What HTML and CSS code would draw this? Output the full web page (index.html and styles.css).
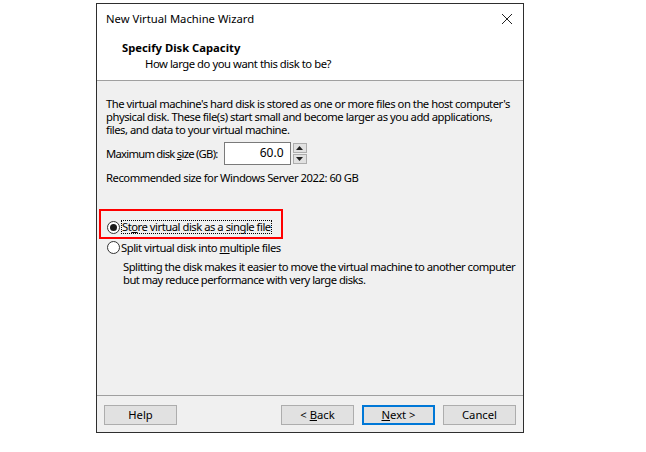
FILE: index.html
```html
<!DOCTYPE html>
<html>
<head>
<meta charset="utf-8">
<link rel="stylesheet" href="styles.css">
</head>
<body>
<div class="window">
  <div class="top">
    <div class="titlebar">
      <span class="title">New Virtual Machine Wizard</span>
      <svg class="close" width="12" height="12" viewBox="0 0 12 12"><path d="M1 1 L11 11 M11 1 L1 11" stroke="#222" stroke-width="1" fill="none"/></svg>
    </div>
    <div class="header">
      <div class="h-title">Specify Disk Capacity</div>
      <div class="h-sub">How large do you want this disk to be?</div>
    </div>
  </div>
  <div class="body">
    <p class="intro">The virtual machine's hard disk is stored as one or more files on the host computer's physical disk. These file(s) start small and become larger as you add applications, files, and data to your virtual machine.</p>
    <div class="size-row">
      <span class="label">Maximum disk <u>s</u>ize (GB):</span>
      <div class="spin">
        <div class="spin-input">60.0</div>
        <div class="spin-btns">
          <div class="spin-btn"><svg width="7" height="4" viewBox="0 0 7 4"><path d="M0 4 L3.5 0 L7 4 Z" fill="#222"/></svg></div>
          <div class="spin-btn"><svg width="7" height="4" viewBox="0 0 7 4"><path d="M0 0 L3.5 4 L7 0 Z" fill="#222"/></svg></div>
        </div>
      </div>
    </div>
    <p class="rec">Recommended size for Windows Server 2022: 60 GB</p>
    <div class="options">
      <div class="radio checked-row">
        <span class="dot checked"></span>
        <span class="focus">St<u>o</u>re virtual disk as a single file</span>
        <span class="highlight"></span>
      </div>
      <div class="radio">
        <span class="dot"></span>
        <span class="rlabel">Split virtual disk into <u>m</u>ultiple files</span>
      </div>
      <p class="desc">Splitting the disk makes it easier to move the virtual machine to another computer but may reduce performance with very large disks.</p>
    </div>
    <div class="spacer"></div>
    <div class="footer">
      <button class="btn">Help</button>
      <div class="grow"></div>
      <button class="btn">&lt; <u>B</u>ack</button>
      <button class="btn default"><u>N</u>ext &gt;</button>
      <button class="btn">Cancel</button>
    </div>
  </div>
</div>
</body>
</html>
```
FILE: styles.css
```css
* { box-sizing: border-box; }
html, body { margin: 0; padding: 0; background: #ffffff; }
body {
  font-family: "Segoe UI", "Noto Sans", "DejaVu Sans", sans-serif;
  font-size: 11.25px;
  color: #000;
}
.window {
  margin: 3px 0 0 96px;
  width: 428px;
  height: 430px;
  border: 1px solid #2e2e2e;
  background: #f0f0f0;
  display: flex;
  flex-direction: column;
}
.top {
  background: #ffffff;
  height: 77px;
  border-bottom: 1px solid #a0a0a0;
  flex: none;
}
.titlebar {
  height: 29px;
  display: flex;
  align-items: center;
  justify-content: space-between;
  padding: 0 10px 0 9px;
}
.title { line-height: 16px; }
.close { display: block; }
.header { padding-left: 25px; padding-top: 7px; }
.h-title { font-weight: bold; line-height: 16px; }
.h-sub { padding-left: 23px; line-height: 16px; letter-spacing: -0.45px; }
.body {
  flex: 1;
  display: flex;
  flex-direction: column;
  padding: 16px 6px 7px 9px;
  letter-spacing: -0.48px;
}
.intro { margin: 0; line-height: 13px; padding-right: 4px; }
.size-row {
  display: flex;
  align-items: center;
  margin-top: 6px;
  gap: 6px;
}
.label { line-height: 14px; letter-spacing: -0.74px; }
.spin { display: flex; align-items: center; gap: 2px; }
.spin-input {
  width: 67px;
  height: 23px;
  border: 1px solid #7a7a7a;
  background: #fff;
  text-align: right;
  padding-right: 6px;
  line-height: 20px;
  font-size: 12px;
  letter-spacing: 0;
}
.spin-btns { display: flex; flex-direction: column; gap: 1px; }
.spin-btn {
  width: 14px;
  height: 10px;
  background: #e1e1e1;
  border: 1px solid #adadad;
  display: flex;
  align-items: center;
  justify-content: center;
}
.spin-btn svg { display: block; }
.rec { margin: 6px 0 0 0; line-height: 14px; }
.options { margin-top: 33px; }
.radio {
  position: relative;
  display: flex;
  align-items: center;
  height: 18px;
  padding-left: 1px;
}
.radio + .radio { margin-top: 2px; }
.dot {
  width: 13px;
  height: 13px;
  border: 1px solid #333;
  border-radius: 50%;
  background: #fff;
  margin-right: 1px;
  position: relative;
  flex: none;
}
.dot.checked::after {
  content: "";
  position: absolute;
  left: 2px; top: 2px;
  width: 7px; height: 7px;
  border-radius: 50%;
  background: #1a1a1a;
}
.focus {
  outline: 1px dotted #000;
  outline-offset: -1px;
  padding: 0 1px;
  line-height: 14px;
}
.highlight {
  position: absolute;
  left: -7px;
  top: -9px;
  width: 184px;
  height: 30px;
  border: 2px solid #ff0000;
  pointer-events: none;
}
.desc { margin: 4px -6px 0 17px; line-height: 13px; letter-spacing: -0.52px; }
.spacer { flex: 1; }
.footer {
  border-top: 1px solid #a0a0a0;
  margin: 0 -6px 0 -9px;
  padding: 9px 7px 0 7px;
  display: flex;
  gap: 8px;
  letter-spacing: 0;
}
.grow { flex: 1; }
.btn {
  width: 73px;
  height: 20px;
  border: 1px solid #adadad;
  background: #e1e1e1;
  font: inherit;
  color: #000;
  padding: 0;
  line-height: 16px;
}
.btn.default { border: 2px solid #0078d7; }
```
